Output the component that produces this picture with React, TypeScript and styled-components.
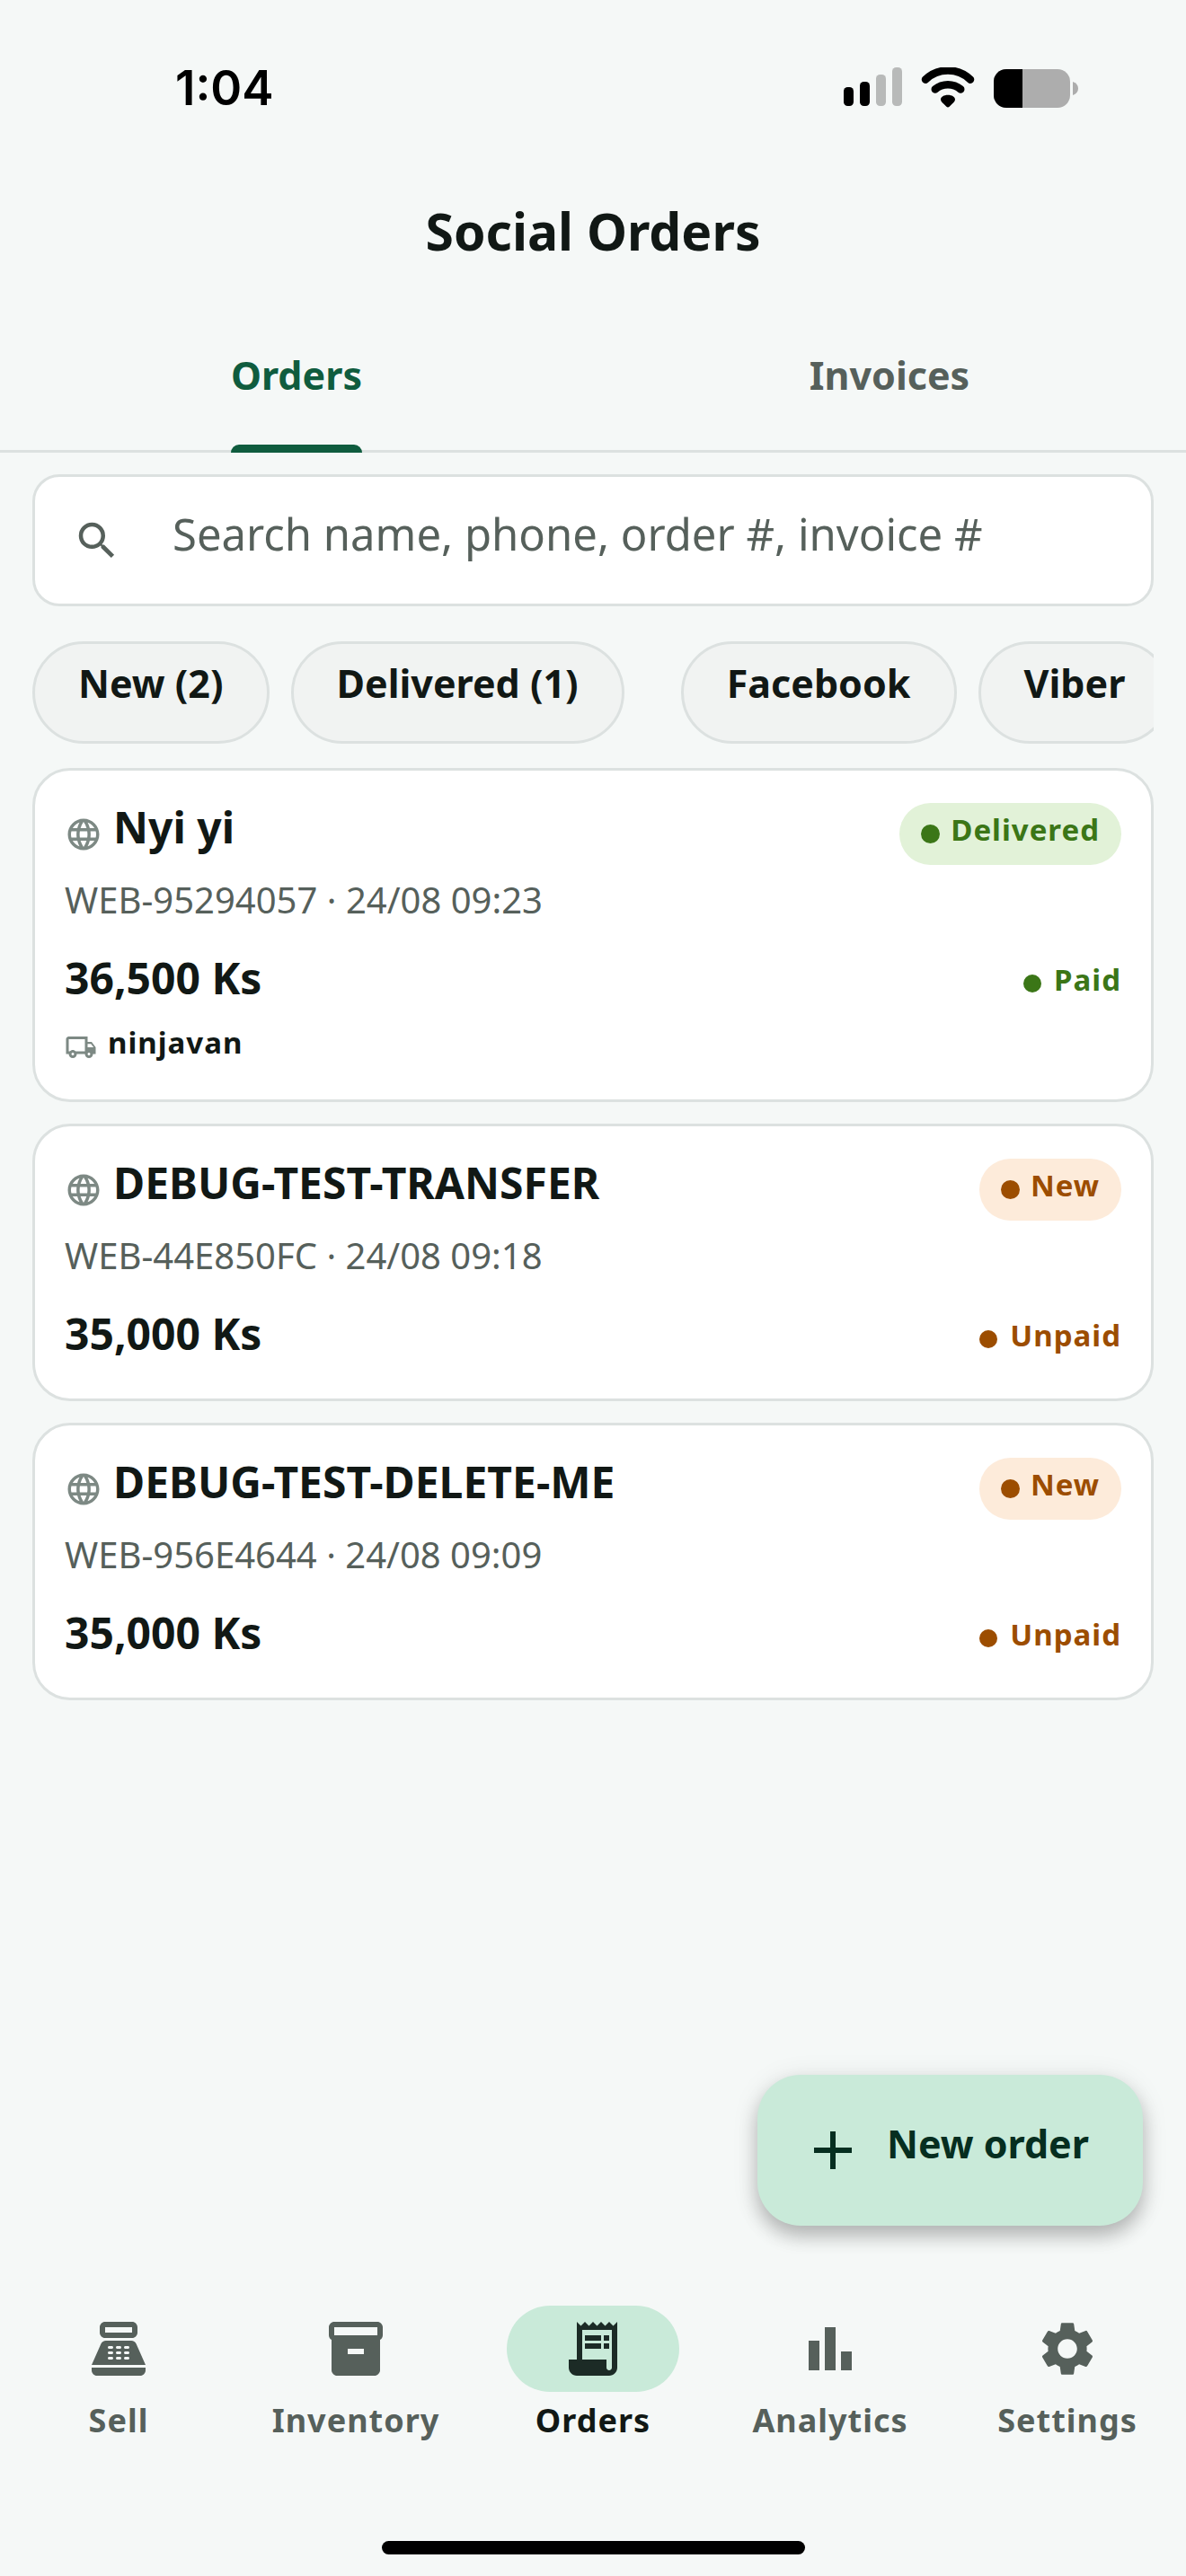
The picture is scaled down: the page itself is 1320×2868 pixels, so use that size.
import React from "react";
import styled, { createGlobalStyle } from "styled-components";
import {
  MdAdd,
  MdInventory2,
  MdLanguage,
  MdOutlineLocalShipping,
  MdPointOfSale,
  MdReceiptLong,
  MdSearch,
  MdSettings,
} from "react-icons/md";

const color = {
  page: "#f5f8f7",
  surface: "#ffffff",
  chip: "#f1f3f2",
  line: "#dce1e0",
  ink: "#111815",
  muted: "#56605b",
  icon: "#7d8984",
  brand: "#0f5c3e",
  mint: "#c9ead9",
  mintInk: "#062e20",
  green: "#3b7617",
  greenSoft: "#e2f2d8",
  amber: "#9c4d00",
  amberSoft: "#fdebda",
};

const GlobalStyle = createGlobalStyle`
  *, *::before, *::after { box-sizing: border-box; }
  body {
    margin: 0;
    background: ${color.page};
    color: ${color.ink};
    font-family: "Noto Sans", "Open Sans", sans-serif;
  }
  button, input { font: inherit; color: inherit; }
  button { border: 0; padding: 0; background: none; cursor: pointer; }
  svg { display: block; flex: none; }
`;

const Screen = styled.div`
  display: flex;
  flex-direction: column;
  min-height: 100vh;
`;

/* Status bar */

const StatusBar = styled.div`
  display: flex;
  align-items: center;
  justify-content: space-between;
  height: 186px;
  padding: 9px 120px 0 195px;
  color: #000;
`;

const Clock = styled.time`
  font: 600 53px/60px Inter, Roboto, sans-serif;
`;

const StatusIcons = styled.div`
  display: flex;
  align-items: center;
  gap: 21px;
`;

/* Header */

const Header = styled.header`
  display: flex;
  align-items: center;
  justify-content: center;
  height: 168px;
  padding-bottom: 26px;
`;

const Title = styled.h1`
  margin: 0;
  font-size: 57px;
  font-weight: 700;
  line-height: 72px;
`;

const Tabs = styled.div`
  display: grid;
  grid-template-columns: 1fr 1fr;
  height: 150px;
  box-shadow: inset 0 -3px 0 ${color.line};
`;

const Tab = styled.button<{ $active?: boolean }>`
  display: flex;
  justify-content: center;
  align-items: flex-end;
  font-size: 43px;
  font-weight: 700;
  line-height: 60px;
  color: ${(p) => (p.$active ? color.brand : color.muted)};
`;

const TabLabel = styled.span<{ $active?: boolean }>`
  display: flex;
  flex-direction: column;
  gap: 47px;

  &::after {
    content: "";
    height: 9px;
    border-radius: 9px 9px 0 0;
    background: ${(p) => (p.$active ? color.brand : "transparent")};
  }
`;

/* Search and filters */

const Content = styled.main`
  display: flex;
  flex: 1;
  flex-direction: column;
  padding: 24px 36px 0;
`;

const SearchBox = styled.label`
  display: flex;
  align-items: center;
  height: 147px;
  border: 3px solid ${color.line};
  border-radius: 30px;
  background: ${color.surface};
  color: ${color.muted};
`;

const SearchIcon = styled.span`
  display: flex;
  justify-content: center;
  width: 138px;
`;

const SearchInput = styled.input`
  flex: 1;
  min-width: 0;
  height: 100%;
  padding: 0 36px 16px 15px;
  border: 0;
  outline: 0;
  background: transparent;
  font-size: 49px;

  &::placeholder {
    color: ${color.muted};
    opacity: 1;
  }
`;

const Filters = styled.div`
  display: flex;
  gap: 63px;
  margin: 39px 0 27px;
  overflow: hidden;
`;

const FilterGroup = styled.div`
  display: flex;
  flex: none;
  gap: 24px;
`;

const Chip = styled.button`
  flex: none;
  height: 114px;
  padding: 0 48px 20px;
  border: 3px solid ${color.line};
  border-radius: 57px;
  background: ${color.chip};
  font-size: 43px;
  font-weight: 700;
  line-height: 60px;
  white-space: nowrap;
`;

/* Orders */

const OrderList = styled.ul`
  display: flex;
  flex-direction: column;
  gap: 24px;
  margin: 0;
  padding: 0;
  list-style: none;
`;

const Card = styled.li`
  padding: 36px 33px;
  border: 3px solid ${color.line};
  border-radius: 42px;
  background: ${color.surface};
`;

const Row = styled.div`
  display: flex;
  align-items: center;
  justify-content: space-between;
`;

const Customer = styled.div`
  display: flex;
  align-items: center;
  gap: 12px;
  color: ${color.icon};
`;

const CustomerName = styled.h2`
  margin: 0;
  padding-bottom: 16px;
  color: ${color.ink};
  font-size: 48px;
  font-weight: 700;
  line-height: 52px;
`;

const Meta = styled.p`
  margin: 12px 0 36px;
  color: ${color.muted};
  font-size: 40px;
  line-height: 54px;
`;

const Price = styled.strong`
  padding-bottom: 12px;
  font-size: 48px;
  font-weight: 700;
  line-height: 48px;
`;

type Tone = "green" | "amber";

const Badge = styled.span<{ $tone: Tone }>`
  display: flex;
  align-items: center;
  gap: 12px;
  height: 69px;
  padding: 0 24px;
  border-radius: 35px;
  background: ${(p) => (p.$tone === "green" ? color.greenSoft : color.amberSoft)};
  color: ${(p) => color[p.$tone]};
`;

const Payment = styled.span<{ $tone: Tone }>`
  display: flex;
  align-items: center;
  gap: 14px;
  color: ${(p) => color[p.$tone]};
`;

const Dot = styled.i<{ $size: number }>`
  width: ${(p) => p.$size}px;
  height: ${(p) => p.$size}px;
  border-radius: 50%;
  background: currentColor;
`;

const SmallLabel = styled.span`
  padding-bottom: 10px;
  font-size: 33px;
  font-weight: 700;
  line-height: 35px;
  letter-spacing: 1px;
`;

const Courier = styled.div`
  display: flex;
  align-items: center;
  gap: 12px;
  margin-top: 18px;
  color: ${color.icon};

  ${SmallLabel} {
    color: ${color.ink};
  }
`;

/* Floating action */

const FabDock = styled.div`
  display: flex;
  justify-content: flex-end;
  margin-top: auto;
  padding: 48px 12px;
`;

const Fab = styled.button`
  display: flex;
  align-items: center;
  gap: 24px;
  height: 168px;
  padding: 0 60px 0 48px;
  border-radius: 48px;
  background: ${color.mint};
  color: ${color.mintInk};
  box-shadow: 0 12px 20px rgba(0, 0, 0, 0.22), 0 4px 30px rgba(0, 0, 0, 0.1);
`;

const FabLabel = styled.span`
  padding-bottom: 14px;
  font-size: 43px;
  font-weight: 700;
  line-height: 60px;
`;

/* Bottom navigation */

const BottomNav = styled.nav`
  display: grid;
  grid-template-columns: repeat(5, 1fr);
  padding-top: 41px;
`;

const NavItem = styled.a<{ $active?: boolean }>`
  display: flex;
  flex-direction: column;
  align-items: center;
  gap: 6px;
  color: ${(p) => (p.$active ? color.ink : color.muted)};
  font-size: 36px;
  font-weight: 700;
  line-height: 52px;
  letter-spacing: 1px;
  text-decoration: none;
`;

const NavIcon = styled.span<{ $active?: boolean }>`
  display: flex;
  align-items: center;
  justify-content: center;
  width: 192px;
  height: 96px;
  border-radius: 48px;
  background: ${(p) => (p.$active ? color.mint : "transparent")};
  color: ${(p) => (p.$active ? "#1c2b26" : "inherit")};
`;

const HomeIndicator = styled.div`
  align-self: center;
  width: 471px;
  height: 15px;
  margin: 108px 0 24px;
  border-radius: 8px;
  background: #000;
`;

function SignalIcon() {
  return (
    <svg width="65" height="46" viewBox="0 0 65 46" aria-hidden="true">
      <rect x="0" y="22" width="11" height="21" rx="4.5" />
      <rect x="18" y="16" width="11" height="27" rx="4.5" />
      <rect x="36" y="8" width="11" height="35" rx="4.5" fill="#b8bab9" />
      <rect x="54" y="0" width="11" height="43" rx="4.5" fill="#b8bab9" />
    </svg>
  );
}

function WifiIcon() {
  return (
    <svg width="60" height="46" viewBox="0 0 60 46" aria-hidden="true">
      <g fill="none" stroke="#000" strokeWidth="8.6" strokeLinecap="round">
        <path d="M5 13.6A36 36 0 0 1 55 13.6" />
        <path d="M15.8 24.4A22 22 0 0 1 44.2 24.4" />
      </g>
      <path d="M30 30.8c4.6 0 8 2.3 8 5 0 1.8-1.4 3-3.4 5l-3 2.9c-1 .9-2.2.9-3.2 0l-3-2.9c-2-2-3.4-3.2-3.4-5 0-2.7 3.4-5 8-5z" />
    </svg>
  );
}

function BatteryIcon() {
  return (
    <svg width="94" height="46" viewBox="0 0 94 46" aria-hidden="true">
      <defs>
        <clipPath id="battery-body">
          <rect x="0" y="2" width="85" height="43" rx="14" />
        </clipPath>
      </defs>
      <g clipPath="url(#battery-body)">
        <rect x="0" y="2" width="85" height="43" fill="#adadad" />
        <rect x="0" y="2" width="32" height="43" />
      </g>
      <path d="M88 16c4 1.3 6 4 6 7.500s-2 6.200-6 7.500z" fill="#adadad" />
    </svg>
  );
}

function BarsIcon({ size }: { size: number }) {
  return (
    <svg width={size} height={size} viewBox="0 0 24 24" fill="currentColor" aria-hidden="true">
      <path d="M4 9h4v11H4zM10 4h4v16h-4zM16 13h4v7h-4z" />
    </svg>
  );
}

interface Order {
  name: string;
  code: string;
  date: string;
  total: string;
  status: string;
  statusTone: Tone;
  payment: string;
  paymentTone: Tone;
  courier?: string;
}

const orders: Order[] = [
  {
    name: "Nyi yi",
    code: "WEB-95294057",
    date: "24/08 09:23",
    total: "36,500 Ks",
    status: "Delivered",
    statusTone: "green",
    payment: "Paid",
    paymentTone: "green",
    courier: "ninjavan",
  },
  {
    name: "DEBUG-TEST-TRANSFER",
    code: "WEB-44E850FC",
    date: "24/08 09:18",
    total: "35,000 Ks",
    status: "New",
    statusTone: "amber",
    payment: "Unpaid",
    paymentTone: "amber",
  },
  {
    name: "DEBUG-TEST-DELETE-ME",
    code: "WEB-956E4644",
    date: "24/08 09:09",
    total: "35,000 Ks",
    status: "New",
    statusTone: "amber",
    payment: "Unpaid",
    paymentTone: "amber",
  },
];

const filterGroups = [
  ["New (2)", "Delivered (1)"],
  ["Facebook", "Viber"],
];

const navItems = [
  { label: "Sell", icon: <MdPointOfSale size={72} /> },
  { label: "Inventory", icon: <MdInventory2 size={72} /> },
  { label: "Orders", icon: <MdReceiptLong size={72} />, active: true },
  { label: "Analytics", icon: <BarsIcon size={72} /> },
  { label: "Settings", icon: <MdSettings size={72} /> },
];

function OrderCard({ order }: { order: Order }) {
  return (
    <Card>
      <Row>
        <Customer>
          <MdLanguage size={42} />
          <CustomerName>{order.name}</CustomerName>
        </Customer>
        <Badge $tone={order.statusTone}>
          <Dot $size={21} />
          <SmallLabel>{order.status}</SmallLabel>
        </Badge>
      </Row>
      <Meta>
        {order.code} · {order.date}
      </Meta>
      <Row>
        <Price>{order.total}</Price>
        <Payment $tone={order.paymentTone}>
          <Dot $size={20} />
          <SmallLabel>{order.payment}</SmallLabel>
        </Payment>
      </Row>
      {order.courier && (
        <Courier>
          <MdOutlineLocalShipping size={36} />
          <SmallLabel>{order.courier}</SmallLabel>
        </Courier>
      )}
    </Card>
  );
}

export default function App() {
  return (
    <Screen>
      <GlobalStyle />
      <StatusBar>
        <Clock>1:04</Clock>
        <StatusIcons>
          <SignalIcon />
          <WifiIcon />
          <BatteryIcon />
        </StatusIcons>
      </StatusBar>
      <Header>
        <Title>Social Orders</Title>
      </Header>
      <Tabs role="tablist">
        <Tab role="tab" aria-selected="true" $active>
          <TabLabel $active>Orders</TabLabel>
        </Tab>
        <Tab role="tab" aria-selected="false">
          <TabLabel>Invoices</TabLabel>
        </Tab>
      </Tabs>
      <Content>
        <SearchBox>
          <SearchIcon>
            <MdSearch size={54} />
          </SearchIcon>
          <SearchInput
            type="text"
            aria-label="Search orders"
            placeholder="Search name, phone, order #, invoice #"
          />
        </SearchBox>
        <Filters>
          {filterGroups.map((group) => (
            <FilterGroup key={group[0]}>
              {group.map((label) => (
                <Chip key={label}>{label}</Chip>
              ))}
            </FilterGroup>
          ))}
        </Filters>
        <OrderList>
          {orders.map((order) => (
            <OrderCard key={order.code} order={order} />
          ))}
        </OrderList>
        <FabDock>
          <Fab>
            <MdAdd size={72} />
            <FabLabel>New order</FabLabel>
          </Fab>
        </FabDock>
      </Content>
      <BottomNav>
        {navItems.map((item) => (
          <NavItem key={item.label} href="#" $active={item.active}>
            <NavIcon $active={item.active}>{item.icon}</NavIcon>
            {item.label}
          </NavItem>
        ))}
      </BottomNav>
      <HomeIndicator />
    </Screen>
  );
}
